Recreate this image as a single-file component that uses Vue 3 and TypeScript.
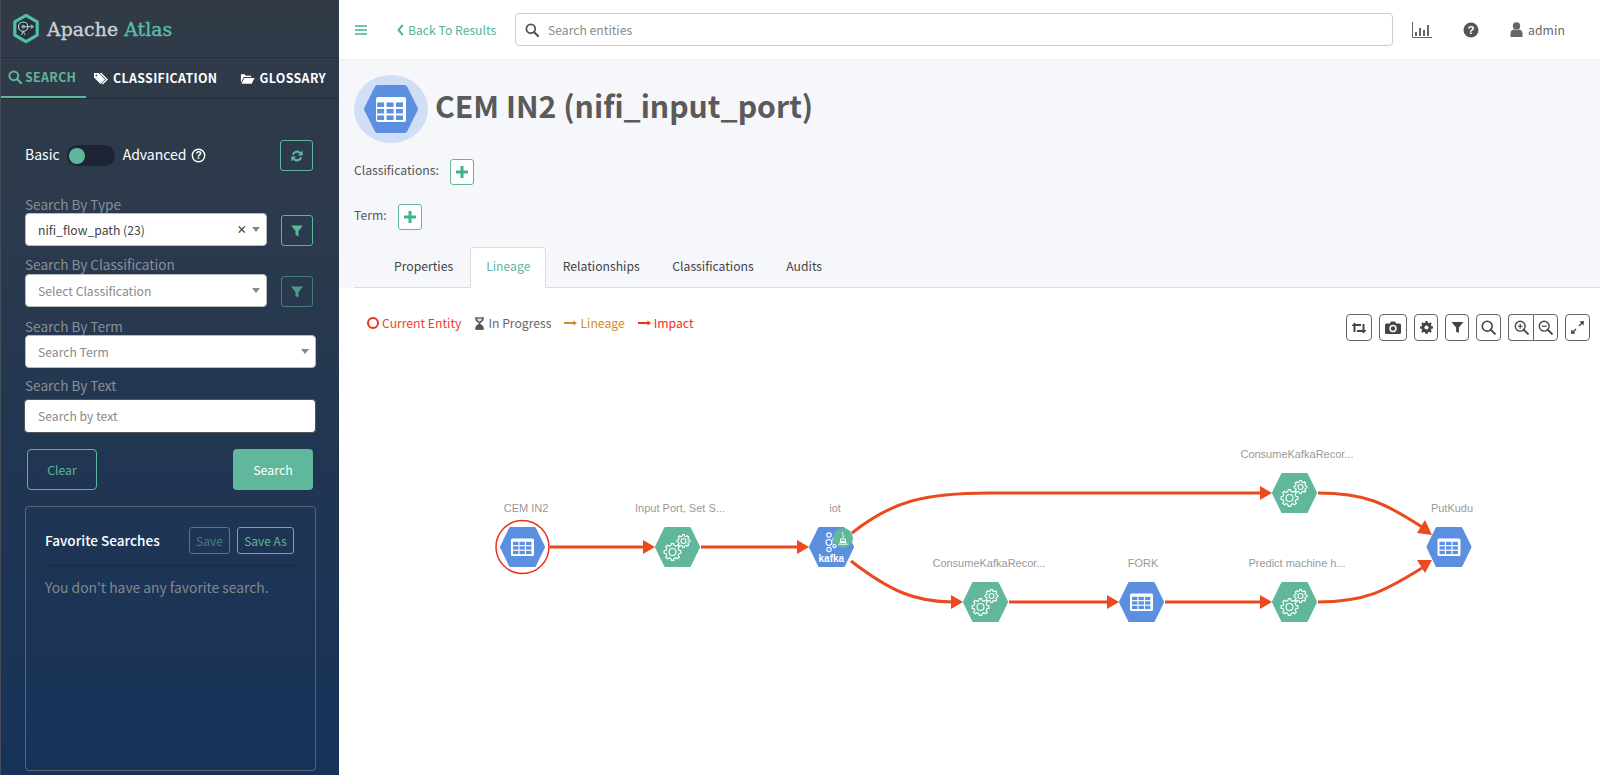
<script setup lang="ts">
interface GNode { x: number; y: number; kind: 'table' | 'gear' | 'kafka'; label: string; lx: number; ly: number }

const nodes: GNode[] = [
  { x: 522.5, y: 546, kind: 'table', label: 'CEM IN2', lx: 526, ly: 511 },
  { x: 677.5, y: 546, kind: 'gear', label: 'Input Port, Set S...', lx: 680, ly: 511 },
  { x: 831.5, y: 546, kind: 'kafka', label: 'iot', lx: 835, ly: 511 },
  { x: 985.5, y: 601, kind: 'gear', label: 'ConsumeKafkaRecor...', lx: 989, ly: 566 },
  { x: 1141.5, y: 601, kind: 'table', label: 'FORK', lx: 1143, ly: 566 },
  { x: 1294.5, y: 601, kind: 'gear', label: 'Predict machine h...', lx: 1297, ly: 566 },
  { x: 1294.5, y: 492, kind: 'gear', label: 'ConsumeKafkaRecor...', lx: 1297, ly: 457 },
  { x: 1449, y: 546, kind: 'table', label: 'PutKudu', lx: 1452, ly: 511 }
]

const edges: string[] = [
  'M550 546H645',
  'M701 546H799',
  'M852 532C892 500 925 492 990 492H1262',
  'M851 560C890 590 915 601 953 601',
  'M1009 601H1109',
  'M1165 601H1262',
  'M1318 492C1365 492 1385 502 1422 526',
  'M1318 601C1365 601 1385 590 1422 567'
]

const arrows: string[] = [
  '655,546 643,539 643,553',
  '809,546 797,539 797,553',
  '1272,492 1260,485 1260,499',
  '963,601 951,594 951,608',
  '1119,601 1107,594 1107,608',
  '1272,601 1260,594 1260,608',
  '1432,534 1417,532 1425,519',
  '1432,559 1425,572 1417,559'
]

const hex = 'M-21 0L-12 -18.5H12L21 0L12 18.5H-12Z'

function gearPath(r: number, teeth: number): string {
  const out: string[] = []
  const inner = r * 0.78
  const step = (Math.PI * 2) / teeth
  for (let i = 0; i < teeth; i++) {
    const a = i * step
    const pts: Array<[number, number]> = [
      [inner, a - step * 0.32],
      [r, a - step * 0.18],
      [r, a + step * 0.18],
      [inner, a + step * 0.32]
    ]
    pts.forEach(([d, t], j) => {
      const c = i === 0 && j === 0 ? 'M' : 'L'
      out.push(`${c}${(d * Math.cos(t)).toFixed(2)} ${(d * Math.sin(t)).toFixed(2)}`)
    })
  }
  return out.join('') + 'Z'
}
const gearBig = gearPath(8.5, 8)
const gearSmall = gearPath(6.5, 8)
const tableCells: Array<[number, number]> = []
for (const y of [-3.5, 1, 5.5]) for (const x of [-9, -2.5, 4]) tableCells.push([x, y])
</script>

<template>
  <div class="app">
    <aside class="side">
      <div class="brand">
        <svg class="logo" viewBox="0 0 30 32">
          <path d="M15 2L27 9V23L15 30L3 23V9Z" fill="#23323c" stroke="#4fc0a8" stroke-width="3.4" stroke-linejoin="round" />
          <circle cx="12" cy="14" r="5" fill="none" stroke="#cfd3d6" stroke-width="1.2" />
          <circle cx="12" cy="14" r="2" fill="#4fc0a8" />
          <path d="M12 14H22M20 12l3 2-3 2M12 19l-2 4M12 19l2 4" fill="none" stroke="#cfd3d6" stroke-width="1" />
        </svg>
        <span class="brand-name">Apache <em>Atlas</em></span>
      </div>

      <nav class="side-tabs">
        <div class="side-tab on">
          <svg viewBox="0 0 14 14" class="ti"><circle cx="5.8" cy="5.8" r="4.4" fill="none" stroke="currentColor" stroke-width="2" /><path d="M9 9l4 4" stroke="currentColor" stroke-width="2.2" stroke-linecap="round" /></svg>
          SEARCH
        </div>
        <div class="side-tab t2">
          <svg viewBox="0 0 16 14" class="ti tw"><path d="M1 1h5l7 7-5 5-7-7z" fill="currentColor" /><path d="M8 1l7 7-5 5" fill="none" stroke="currentColor" stroke-width="1.4" /><circle cx="3.6" cy="3.6" r="1" fill="#2e3a4a" /></svg>
          CLASSIFICATION
        </div>
        <div class="side-tab t3">
          <svg viewBox="0 0 16 13" class="ti tw"><path d="M1 11V2h4l1.400 1.500H12V5H4L1 11Z" fill="currentColor" /><path d="M4.500 6H15.500L12.500 12H1.500Z" fill="currentColor" /></svg>
          GLOSSARY
        </div>
      </nav>

      <div class="mode-row">
        <span class="mode">Basic</span>
        <span class="toggle"><i /></span>
        <span class="mode">Advanced</span>
        <svg viewBox="0 0 14 14" class="help"><circle cx="7" cy="7" r="5.8" fill="none" stroke="currentColor" stroke-width="1.300" /><text x="7" y="10.300" text-anchor="middle" font-size="9.500" font-weight="700" fill="currentColor" font-family="Liberation Sans, sans-serif">?</text></svg>
        <button class="ibtn refresh">
          <svg viewBox="0 0 14 14" width="16" height="16"><path d="M2.500 6a4.700 4.700 0 0 1 8-2.300L12 2.200V6.500H7.700l1.500-1.500A3 3 0 0 0 4.300 6ZM11.500 8a4.700 4.700 0 0 1-8 2.300L2 11.800V7.500h4.300L4.800 9a3 3 0 0 0 4.900-1Z" fill="#5db79a" /></svg>
        </button>
      </div>

      <label class="flabel l1">Search By Type</label>
      <div class="frow">
        <div class="sel short"><span class="val">nifi_flow_path (23)</span><b class="x">×</b><i class="caret" /></div>
        <button class="ibtn fbtn"><svg viewBox="0 0 14 14" width="14" height="14"><path d="M1 1.500h12L8.500 7v5.500l-3-1.500V7Z" fill="#5db79a" /></svg></button>
      </div>
      <label class="flabel l2">Search By Classification</label>
      <div class="frow drop1">
        <div class="sel short"><span class="ph">Select Classification</span><i class="caret" /></div>
        <button class="ibtn fbtn dim"><svg viewBox="0 0 14 14" width="14" height="14"><path d="M1 1.500h12L8.500 7v5.500l-3-1.500V7Z" fill="#4a9c88" /></svg></button>
      </div>
      <label class="flabel l3">Search By Term</label>
      <div class="frow">
        <div class="sel full"><span class="ph">Search Term</span><i class="caret" /></div>
      </div>
      <label class="flabel l4">Search By Text</label>
      <input class="txt" placeholder="Search by text" />

      <div class="acts">
        <button class="clear">Clear</button>
        <button class="go">Search</button>
      </div>

      <section class="fav">
        <div class="fav-head">
          <strong>Favorite Searches</strong>
          <button class="sv dim">Save</button>
          <button class="sv as">Save As</button>
        </div>
        <p>You don't have any favorite search.</p>
      </section>
    </aside>

    <main class="main">
      <header class="top">
        <svg class="burger" viewBox="0 0 12 10"><path d="M0 1h12M0 5h12M0 9h12" stroke="#3fb28f" stroke-width="1.500" /></svg>
        <a class="back">
          <svg viewBox="0 0 7 12" width="7" height="12"><path d="M5.800 1L1.500 6l4.300 5" fill="none" stroke="#4fb596" stroke-width="2" /></svg>
          Back To Results
        </a>
        <div class="gsearch">
          <svg viewBox="0 0 14 14" width="14" height="14"><circle cx="5.800" cy="5.800" r="4.400" fill="none" stroke="#555" stroke-width="1.800" /><path d="M9 9l4 4" stroke="#555" stroke-width="2.200" stroke-linecap="round" /></svg>
          <span>Search entities</span>
        </div>
        <svg class="chart" viewBox="0 0 20 16"><path d="M.5 0v15.500H20" fill="none" stroke="#666" /><path d="M4 10v4M8 6v8M12 8v6M16 3v11" stroke="#666" stroke-width="2" /></svg>
        <svg class="qm" viewBox="0 0 16 16"><circle cx="8" cy="8" r="7.500" fill="#555" /><text x="8" y="12" text-anchor="middle" font-size="11.500" font-weight="700" fill="#fff" font-family="Liberation Sans, sans-serif">?</text></svg>
        <svg class="usr" viewBox="0 0 13 15"><circle cx="6.500" cy="4" r="3.700" fill="#666" /><path d="M.5 15v-3.500C.5 9 2.500 7.500 4 7.500c1.500 1 3.500 1 5 0 1.500 0 3.500 1.500 3.500 4V15Z" fill="#666" /></svg>
        <span class="admin">admin</span>
      </header>

      <section class="sub">
        <div class="title-row">
          <div class="badge">
            <svg viewBox="-37 -34 74 68" width="74" height="68">
              <path d="M-24 0L-13.500 -21H13.500L24 0L13.500 21H-13.500Z" fill="#5c8fdf" stroke="#5c8fdf" stroke-width="6" stroke-linejoin="round" />
              <rect x="-15" y="-12" width="30" height="25" rx="2" fill="#fff" />
              <g fill="#5c8fdf"><rect v-for="c in tableCells" :key="c.join()" :x="c[0] * 1.45 - 0.8" :y="c[1] * 1.45 - 1.500" width="7" height="4.500" /></g>
            </svg>
          </div>
          <h1>CEM IN2 (nifi_input_port)</h1>
        </div>
        <div class="tagrow r1"><span>Classifications:</span><button class="plus"><svg viewBox="0 0 12 12" width="12" height="12"><path d="M6 0v12M0 6h12" stroke="#3fb28f" stroke-width="3" /></svg></button></div>
        <div class="tagrow r2"><span>Term:</span><button class="plus"><svg viewBox="0 0 12 12" width="12" height="12"><path d="M6 0v12M0 6h12" stroke="#3fb28f" stroke-width="3" /></svg></button></div>
        <nav class="tabs">
          <a>Properties</a>
          <a class="on">Lineage</a>
          <a>Relationships</a>
          <a>Classifications</a>
          <a>Audits</a>
        </nav>
      </section>

      <section class="lineage">
        <div class="bar">
          <div class="legend">
            <span class="cur"><i class="ring" />Current Entity</span>
            <span class="prog">
              <svg viewBox="0 0 11 13" width="11" height="13"><path d="M1 .8h9M1 12.200h9M2 1v2.500L5.500 6.500 9 3.500V1M2 12v-2.500L5.500 6.500 9 9.500V12Z" fill="#555" stroke="#555" stroke-width="1" /><path d="M3.200 1.500h4.600v1.500L5.500 5 3.200 3Z" fill="#ddd" /></svg>
              In Progress
            </span>
            <span class="lin">
              <svg viewBox="0 0 13 8" width="13" height="8"><path d="M0 4h10" stroke="currentColor" stroke-width="2" /><path d="M9.500 1.500L13 4 9.500 6.500Z" fill="currentColor" /></svg>
              Lineage
            </span>
            <span class="imp">
              <svg viewBox="0 0 13 8" width="13" height="8"><path d="M0 4h10" stroke="currentColor" stroke-width="2" /><path d="M9.500 1.500L13 4 9.500 6.500Z" fill="currentColor" /></svg>
              Impact
            </span>
          </div>
          <div class="tools">
            <button class="tb w27"><svg viewBox="0 0 16 12" width="16" height="12"><path d="M3.500 10V3H10M12.500 2v7H6" fill="none" stroke="#444" stroke-width="2" /><path d="M0.500 4L3.500 .5 6.500 4ZM9.500 8l3 3.500 3-3.500Z" fill="#444" /></svg></button>
            <button class="tb w28"><svg viewBox="0 0 16 13" width="16" height="13"><path d="M1.500 2.500H5L6 .5H10L11 2.500H14.500Q16 2.500 16 4V11.500Q16 13 14.500 13H1.500Q0 13 0 11.500V4Q0 2.500 1.500 2.500Z" fill="#444" /><circle cx="8" cy="7.500" r="3.700" fill="#fff" /><circle cx="8" cy="7.500" r="2.200" fill="#444" /></svg></button>
            <button class="tb w24"><svg viewBox="-7 -7 14 14" width="13" height="13"><path :d="gearPath(7, 8)" fill="#444" /><circle r="2.200" fill="#fff" /></svg></button>
            <button class="tb w24"><svg viewBox="0 0 14 14" width="13" height="13"><path d="M.5 1h13L8.500 7v6l-3-1.500V7Z" fill="#444" /></svg></button>
            <button class="tb w25"><svg viewBox="0 0 14 14" width="15" height="15"><circle cx="5.800" cy="5.800" r="4.600" fill="none" stroke="#444" stroke-width="1.500" /><path d="M9 9l4 4" stroke="#444" stroke-width="1.800" stroke-linecap="round" /></svg></button>
            <div class="tgroup">
              <button class="tb"><svg viewBox="0 0 14 14" width="15" height="15"><circle cx="5.800" cy="5.800" r="4.600" fill="none" stroke="#444" stroke-width="1.300" /><path d="M9 9l4 4" stroke="#444" stroke-width="1.800" stroke-linecap="round" /><path d="M3.500 5.800h4.600M5.800 3.500v4.600" stroke="#444" stroke-width="1.100" /></svg></button>
              <button class="tb"><svg viewBox="0 0 14 14" width="15" height="15"><circle cx="5.800" cy="5.800" r="4.600" fill="none" stroke="#444" stroke-width="1.300" /><path d="M9 9l4 4" stroke="#444" stroke-width="1.800" stroke-linecap="round" /><path d="M3.500 5.800h4.600" stroke="#444" stroke-width="1.100" /></svg></button>
            </div>
            <button class="tb w25"><svg viewBox="0 0 13 13" width="13" height="13"><path d="M13 0L8.500 .5 10 2 7.500 4.500l1 1L11 3l1.500 1.500ZM0 13l4.500-.5L3 11l2.500-2.500-1-1L2 10 .5 8.500Z" fill="#444" /></svg></button>
          </div>
        </div>

        <div class="canvas">
          <svg class="graph" viewBox="339 345 1261 430" width="1261" height="430">
            <path v-for="(d, i) in edges" :key="'e' + i" :d="d" fill="none" stroke="#ea4a1d" stroke-width="3" />
            <polygon v-for="(p, i) in arrows" :key="'a' + i" :points="p" fill="#ea4a1d" />

            <circle cx="522.500" cy="546" r="26.500" fill="#fff" stroke="#ec2d17" stroke-width="1.500" />

            <g v-for="(n, i) in nodes" :key="'n' + i">
              <text :x="n.lx" :y="n.ly" text-anchor="middle" class="nlabel">{{ n.label }}</text>
              <g :transform="`translate(${n.x} ${n.y})`">
                <path :d="hex" :fill="n.kind === 'gear' ? '#60b79b' : '#5c8fdf'" :stroke="n.kind === 'gear' ? '#60b79b' : '#5c8fdf'" stroke-width="3" stroke-linejoin="round" />
                <template v-if="n.kind === 'table'">
                  <rect x="-11.500" y="-8.500" width="23" height="17.500" rx="1.500" fill="#fff" />
                  <g fill="#5c8fdf"><rect v-for="c in tableCells" :key="c.join()" :x="c[0] - .5" :y="c[1] - 1.700" width="5.400" height="3.300" /></g>
                </template>
                <template v-else-if="n.kind === 'gear'">
                  <g fill="none" stroke="#fff" stroke-width="1.100">
                    <g transform="translate(-5 5)"><path :d="gearBig" /><circle r="3.500" /></g>
                    <g transform="translate(6 -6)"><path :d="gearSmall" /><circle r="2.500" /></g>
                  </g>
                </template>
                <template v-else>
                  <g fill="none" stroke="#fff" stroke-width="1.200">
                    <circle cx="-2.500" cy="-12" r="2.200" /><circle cx="-2.500" cy="-4.500" r="3" /><circle cx="-2.500" cy="2.500" r="2.200" />
                    <circle cx="3" cy="-8" r="1.600" /><circle cx="3" cy="-1" r="1.600" />
                  </g>
                  <text x="-.2" y="14.500" text-anchor="middle" class="kafka">kafka</text>
                  <circle cx="11.500" cy="-9" r="10" fill="#60b79b" />
                  <path d="M8 -4.500h7M7 -2.800h9M9 -8h5v2.500h-5ZM11.500 -15c-2 2.500 1.500 3 0 6" fill="none" stroke="#fff" stroke-width="1" />
                </template>
              </g>
            </g>
          </svg>
        </div>
      </section>
    </main>
  </div>
</template>

<style scoped>
.app {
  display: flex;
  width: 1600px;
  height: 775px;
  overflow: hidden;
  font-family: "Noto Sans CJK SC", "Noto Sans", sans-serif;
  font-size: 12.200px;
  color: #555;
}
button { font-family: inherit; cursor: pointer; background: none; padding: 0; }

/* sidebar */
.side {
  width: 339px;
  flex: none;
  box-sizing: border-box;
  border-left: 1px solid #454d59;
  background: linear-gradient(180deg, #323a47 0%, #2b3a4d 30%, #1f3553 65%, #17325a 100%);
  color: #fff;
  display: flex;
  flex-direction: column;
}
.brand {
  height: 58px;
  flex: none;
  box-sizing: border-box;
  border-bottom: 1px solid #262c37;
  display: flex;
  align-items: center;
  padding-left: 11px;
  gap: 7px;
}
.logo { width: 28px; height: 31px; }
.brand-name {
  font-family: "DejaVu Serif", serif;
  font-size: 18.800px;
  color: #cfd2d5;
  letter-spacing: .1px;
  -webkit-text-stroke: .35px currentColor;
  padding-top: 2px;
}
.brand-name em { font-style: normal; color: #55c0a8; }
.side-tabs {
  height: 41px;
  flex: none;
  box-sizing: border-box;
  display: flex;
  border-bottom: 1px solid #262c37;
}
.side-tab {
  display: flex;
  align-items: center;
  font-size: 12.400px;
  font-weight: 700;
  letter-spacing: .35px;
  gap: 5px;
  height: 40px;
  color: #fff;
  white-space: nowrap;
}
.side-tab.on {
  width: 85px;
  box-sizing: border-box;
  padding-left: 7px;
  gap: 3px;
  color: #5db79a;
  border-bottom: 2px solid #5db79a;
}
.t2 { margin-left: 7px; }
.t3 { margin-left: 22px; }
.ti { width: 14px; height: 14px; flex: none; }
.tw { width: 15px; height: 13px; }
.mode-row {
  display: flex;
  align-items: center;
  height: 31px;
  margin-top: 41px;
  padding-left: 24px;
  font-size: 14px;
  line-height: 18px;
}
.mode { padding-bottom: 3px; }
.toggle {
  width: 48px;
  height: 21px;
  border-radius: 11px;
  background: #1d2435;
  margin: 0 8px 0 7px;
  display: flex;
  align-items: center;
  padding-left: 2px;
  box-sizing: border-box;
}
.toggle i { width: 16px; height: 16px; border-radius: 50%; background: #5db79a; }
.help { width: 15px; height: 15px; margin-left: 5px; }
.ibtn {
  border: 1px solid #5db79a;
  border-radius: 3px;
  box-sizing: border-box;
  display: flex;
  align-items: center;
  justify-content: center;
}
.refresh { width: 33px; height: 31px; margin-left: auto; margin-right: 26px; }
.flabel {
  font-size: 13.600px;
  line-height: 18px;
  color: #8a8f97;
  padding-left: 24px;
  display: block;
}
.l1 { margin-top: 24px; }
.l2 { margin-top: 9px; }
.l3 { margin-top: 10px; }
.l4 { margin-top: 8px; }
.frow { display: flex; align-items: flex-end; padding-left: 24px; }
.drop1 { margin-top: 1px; }
.sel {
  height: 33px;
  box-sizing: border-box;
  background: #fff;
  border: 1px solid #bbb;
  border-radius: 4px;
  display: flex;
  align-items: center;
  padding: 0 6px 0 12px;
  font-size: 12.200px;
  color: #444;
}
.short { width: 242px; }
.full { width: 291px; }
.ph { color: #8a8a8a; }
.x { margin-left: auto; color: #333; font-size: 10.500px; margin-right: 5px; }
.caret {
  width: 0;
  height: 0;
  border-left: 4px solid transparent;
  border-right: 4px solid transparent;
  border-top: 5px solid #888;
}
.ph + .caret { margin-left: auto; }
.fbtn { width: 32px; height: 31px; margin-left: 14px; }
.fbtn.dim { border-color: #3f8077; }
.txt {
  display: block;
  margin: 5px 0 0 23px;
  width: 292px;
  height: 34px;
  box-sizing: border-box;
  background: #fff;
  border: 1px solid #555;
  border-radius: 4px;
  padding: 0 13px;
  font: 12.200px "Noto Sans CJK SC", sans-serif;
  outline: none;
}
.txt::placeholder { color: #8a8a8a; opacity: 1; }
.acts {
  display: flex;
  justify-content: space-between;
  padding: 0 26px 0 26px;
  margin-top: 16px;
}
.clear {
  width: 70px;
  height: 41px;
  border: 1px solid #5db79a;
  border-radius: 4px;
  color: #5db79a;
  font-size: 12.200px;
}
.go {
  width: 80px;
  height: 41px;
  border: none;
  border-radius: 4px;
  background: #60b79b;
  color: #fff;
  font-size: 12.400px;
}
.fav {
  margin: 16px 0 4px 24px;
  width: 291px;
  flex: 1;
  box-sizing: border-box;
  border: 1px solid #5a6470;
  border-radius: 4px;
  padding: 20px 19px 0;
}
.fav-head {
  display: flex;
  align-items: center;
  height: 39px;
  box-sizing: border-box;
  padding-bottom: 12px;
  border-bottom: 1px solid #1d2a3f;
}
.fav-head strong { font-weight: 500; font-size: 13.600px; margin-right: auto; }
.sv {
  height: 27px;
  font-size: 12px;
  border: 1px solid #5db79a;
  border-radius: 3px;
  color: #5db79a;
  box-sizing: border-box;
}
.sv.dim { width: 41px; opacity: .6; margin-right: 7px; }
.sv.as { width: 57px; margin-right: 2px; }
.fav p { margin: 10px 0 0; font-size: 13.850px; line-height: 22px; color: #84898f; }

/* main */
.main { flex: 1; min-width: 0; display: flex; flex-direction: column; background: #fff; }
.top {
  height: 60px;
  flex: none;
  box-sizing: border-box;
  border-bottom: 1px solid #eee;
  display: flex;
  align-items: center;
}
.burger { width: 12px; height: 10px; margin-left: 16px; }
.back {
  margin-left: 30px;
  color: #4fb596;
  font-size: 12.200px;
  display: flex;
  align-items: center;
  gap: 4px;
  width: 118px;
}
.gsearch {
  width: 878px;
  height: 33px;
  box-sizing: border-box;
  border: 1px solid #ccc;
  border-radius: 4px;
  display: flex;
  align-items: center;
  padding-left: 9px;
  gap: 9px;
  color: #8a8a8a;
  font-size: 12.200px;
}
.chart { width: 20px; height: 16px; margin-left: 19px; }
.qm { width: 16px; height: 16px; margin-left: 31px; }
.usr { width: 13px; height: 15px; margin-left: 31px; }
.admin { margin-left: 5px; font-size: 12.200px; color: #666; letter-spacing: .1px; }

.sub {
  flex: none;
  height: 228px;
  box-sizing: border-box;
  background: #f6f7fb;
  padding-left: 15px;
  display: flex;
  flex-direction: column;
}
.title-row { display: flex; align-items: center; margin-top: 15px; height: 68px; }
.badge {
  width: 74px;
  height: 68px;
  border-radius: 50%;
  background: #d0dff7;
  display: flex;
}
h1 {
  margin: 0 0 8px 7px;
  font-size: 30.200px;
  line-height: 44px;
  font-weight: 700;
  color: #5a5a5a;
}
.tagrow { display: flex; align-items: center; color: #555; font-size: 12.200px; }
.r1 { margin-top: 16px; gap: 11px; }
.r2 { margin-top: 19px; gap: 11px; }
.tagrow span { padding-bottom: 4px; }
.plus {
  width: 24px;
  height: 26px;
  border: 1px solid #60b79b;
  border-radius: 3px;
  background: #fff;
  display: flex;
  align-items: center;
  justify-content: center;
}
.tabs {
  display: flex;
  margin-top: auto;
  border-bottom: 1px solid #ddd;
  height: 41px;
  box-sizing: border-box;
  font-size: 12.200px;
  color: #444;
}
.tabs a {
  padding: 9px 16.300px 0;
  line-height: 21px;
  height: 40px;
  box-sizing: border-box;
}
.tabs a:first-child { padding-left: 40px; padding-right: 17px; }
.tabs a.on {
  color: #60b79b;
  background: #fff;
  border: 1px solid #ddd;
  border-bottom: none;
  border-radius: 4px 4px 0 0;
  height: 41px;
  padding: 8px 15px 0;
  margin: 0 0 -1px 0;
}
.lineage { flex: 1; min-height: 0; display: flex; flex-direction: column; }
.bar { display: flex; justify-content: space-between; height: 58px; box-sizing: border-box; padding: 26px 10px 0 28px; }
.legend { display: flex; align-items: flex-start; font-size: 12.200px; line-height: 18px; gap: 13px; }
.legend span { display: flex; align-items: center; gap: 3px; }
.cur { color: #f0401f; }
.ring { width: 12px; height: 12px; box-sizing: border-box; border: 2px solid #f0301a; border-radius: 50%; }
.prog { color: #666; }
.lin { color: #d68a21; }
.imp { color: #f0301a; }
.tools { display: flex; gap: 7px; align-items: flex-start; }
.tb {
  height: 27px;
  box-sizing: border-box;
  border: 1px solid #666;
  border-radius: 4px;
  display: flex;
  align-items: center;
  justify-content: center;
  background: #fff;
}
.w27 { width: 26px; }
.w28 { width: 28px; }
.w24 { width: 24px; }
.w25 { width: 25px; }
.tgroup { display: flex; }
.tgroup .tb { width: 25px; }
.tgroup .tb:first-child { border-radius: 4px 0 0 4px; border-right: none; }
.tgroup .tb:last-child { border-radius: 0 4px 4px 0; }
.canvas { flex: 1; min-height: 0; }
.graph { display: block; }
.nlabel { font-family: "Liberation Sans", sans-serif; font-size: 11px; fill: #999; }
.kafka { font-family: "Liberation Sans", sans-serif; font-size: 10px; font-weight: 700; fill: #fff; }
</style>

<style>
html, body { margin: 0; padding: 0; overflow: hidden; background: #fff; }
</style>
